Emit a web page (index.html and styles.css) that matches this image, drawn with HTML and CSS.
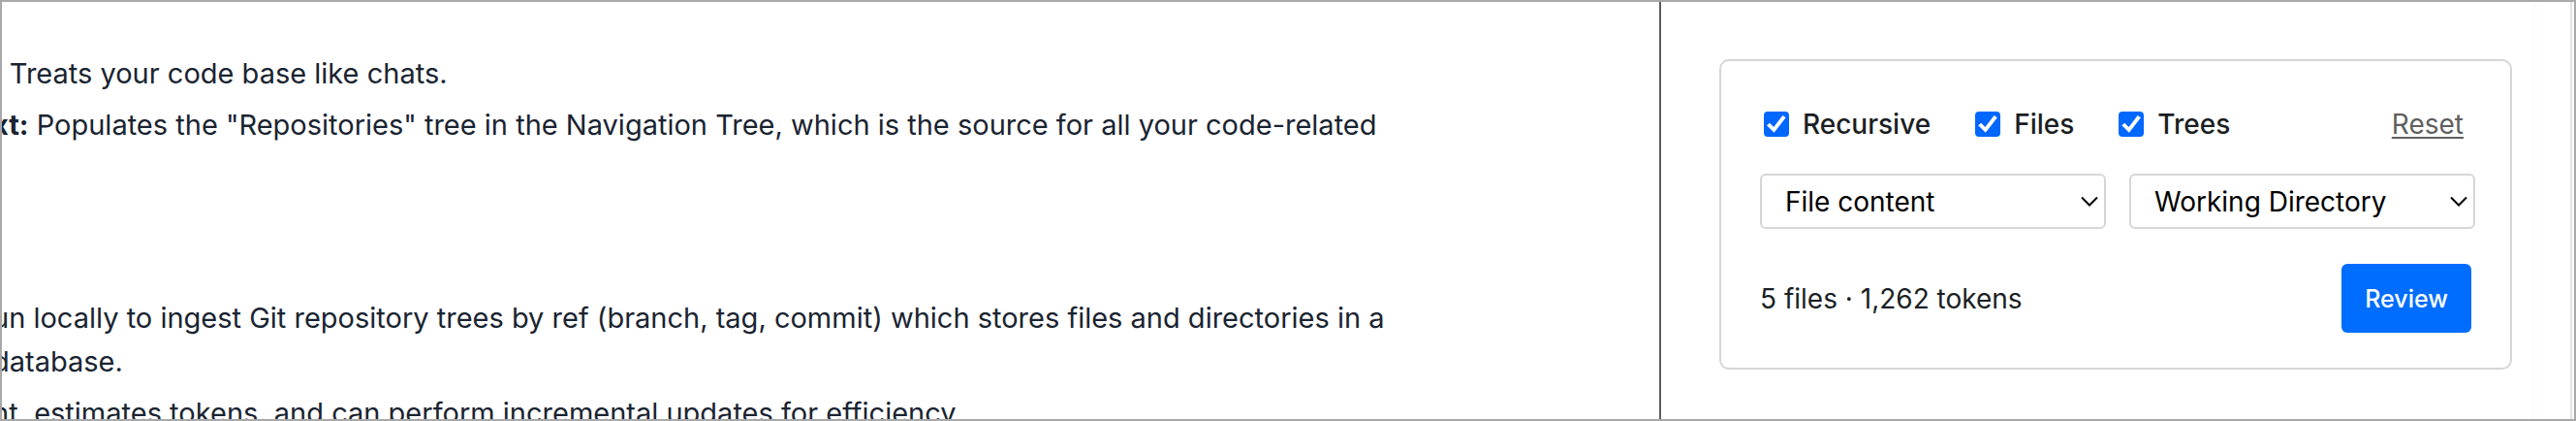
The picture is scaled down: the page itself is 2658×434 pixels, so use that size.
FILE: index.html
```html
<!DOCTYPE html>
<html lang="en">
<head>
<meta charset="utf-8">
<title>Context</title>
<link rel="stylesheet" href="styles.css">
</head>
<body>
<div class="app">
  <main class="document">
    <ul class="list">
      <li><b>:</b> Treats your code base like chats.</li>
      <li><b>xt:</b> Populates the "Repositories" tree in the Navigation Tree, which is the source for all your code-related</li>
    </ul>
    <ul class="list">
      <li>un locally to ingest Git repository trees by ref (branch, tag, commit) which stores files and directories in a database.</li>
      <li>nt, estimates tokens, and can perform incremental updates for efficiency.</li>
    </ul>
  </main>
  <aside class="sidebar">
    <form class="card">
      <div class="options">
        <label class="option"><input class="check" type="checkbox" checked>Recursive</label>
        <label class="option"><input class="check" type="checkbox" checked>Files</label>
        <label class="option"><input class="check" type="checkbox" checked>Trees</label>
        <a class="reset" href="#">Reset</a>
      </div>
      <div class="selects">
        <div class="picker">
          <select class="select" aria-label="Content"><option>File content</option></select>
          <svg class="chevron" viewBox="0 0 18 12" aria-hidden="true"><path d="M1 1.5 9 9.5 17 1.5"/></svg>
        </div>
        <div class="picker">
          <select class="select" aria-label="Source"><option>Working Directory</option></select>
          <svg class="chevron" viewBox="0 0 18 12" aria-hidden="true"><path d="M1 1.5 9 9.5 17 1.5"/></svg>
        </div>
      </div>
      <div class="summary">
        <span>5 files · 1,262 tokens</span>
        <button class="review" type="button">Review</button>
      </div>
    </form>
  </aside>
  <div class="gutter"></div>
</div>
</body>
</html>
```
FILE: styles.css
```css
* {
  box-sizing: border-box;
}

body {
  margin: 0;
  font-family: Inter, "Liberation Sans", sans-serif;
  font-size: 28px;
  color: #1b1f24;
  background: #fff;
}

.app {
  display: flex;
  height: 100vh;
  overflow: hidden;
  border: 2px solid #a9a9a9;
}

.document {
  flex: 1;
  min-width: 0;
  padding: 51px 240px 0 0;
  overflow: hidden;
  color: #1a2431;
  font-size: 29px;
  line-height: 45px;
}

.list {
  margin: 0 0 154px -10px;
  padding: 0;
  list-style: none;
}

.list li + li {
  margin-top: 8px;
}

.sidebar {
  flex: 0 0 900px;
  padding: 59px 20px 0 60px;
  border-left: 2px solid #5c5c5c;
}

.card {
  display: flex;
  flex-direction: column;
  padding: 36px 36px 36px 40px;
  border: 2px solid #d6d6d6;
  border-radius: 10px;
}

.options {
  display: flex;
  align-items: center;
  gap: 46px;
  height: 58px;
  padding: 0 12px 0 4px;
  font-weight: 500;
}

.option {
  display: flex;
  align-items: center;
  gap: 14px;
}

.check {
  display: grid;
  place-items: center;
  width: 26px;
  height: 26px;
  margin: 0;
  appearance: none;
  background: #0067ff;
  border-radius: 4px;
}

.check:checked::before {
  content: "";
  width: 20px;
  height: 18px;
  background: #fff;
  clip-path: polygon(0 57%, 15% 43%, 36% 66%, 82% 0, 98% 12%, 38% 98%);
}

.reset {
  margin-left: auto;
  color: #5f5f5f;
  font-weight: 400;
  text-decoration-thickness: 2px;
  text-underline-offset: 3px;
}

.selects {
  display: grid;
  grid-template-columns: 1fr 1fr;
  gap: 24px;
  margin-top: 22px;
}

.picker {
  display: grid;
  align-items: center;
}

.select,
.chevron {
  grid-area: 1 / 1;
}

.select {
  width: 100%;
  height: 57px;
  padding: 0 40px 0 24px;
  appearance: none;
  color: #000;
  font: inherit;
  background: #fff;
  border: 2px solid #d6d6d6;
  border-radius: 6px;
}

.chevron {
  justify-self: end;
  width: 18px;
  height: 12px;
  margin-right: 8px;
  fill: none;
  stroke: #000;
  stroke-width: 2;
  pointer-events: none;
}

.summary {
  display: flex;
  align-items: center;
  justify-content: space-between;
  margin-top: 36px;
  padding-right: 4px;
}

.review {
  height: 71px;
  padding: 0 24px;
  color: #fff;
  font: 500 25px Inter, "Liberation Sans", sans-serif;
  background: #006dff;
  border: 0;
  border-radius: 6px;
}

.gutter {
  flex: 0 0 42px;
  background: linear-gradient(90deg, #fbfbfb, #fff 8px);
  border-right: 2px solid #e4e4e4;
  margin-right: 2px;
}
```
